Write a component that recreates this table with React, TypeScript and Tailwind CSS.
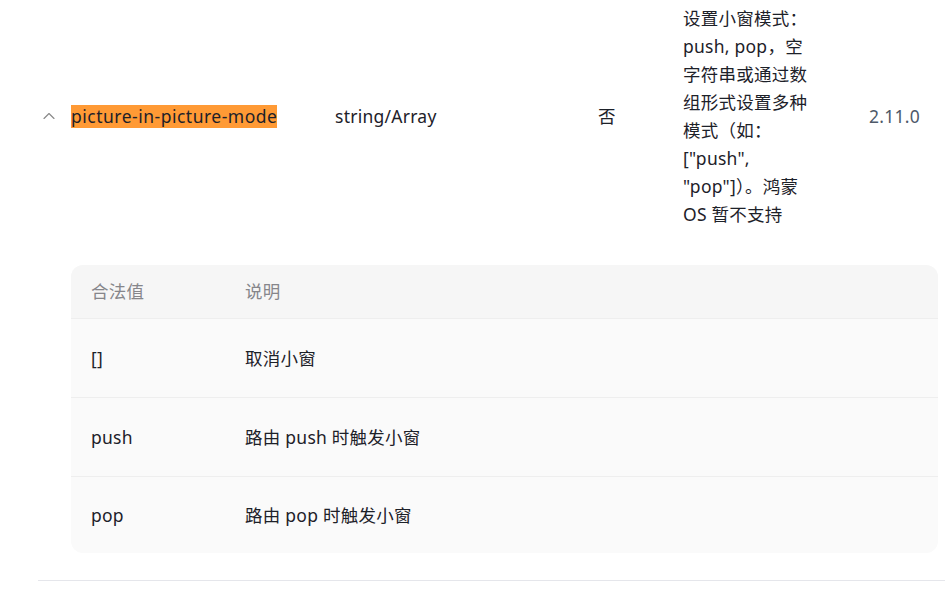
import { ChevronUp } from 'lucide-react'

const font = { fontFamily: '"Noto Sans", "Noto Sans CJK SC", sans-serif' }

// Values table shown when the prop row is expanded
const values = [
  { value: '[]', desc: '取消小窗' },
  { value: 'push', desc: '路由 push 时触发小窗' },
  { value: 'pop', desc: '路由 pop 时触发小窗' },
]

const descLines = [
  '设置小窗模式：',
  'push, pop，空',
  '字符串或通过数',
  '组形式设置多种',
  '模式（如：',
  '["push",',
  '"pop"]）。鸿蒙',
  'OS 暂不支持',
]

export default function App() {
  return (
    <div
      className="w-[945px] h-[590px] bg-white overflow-hidden text-[17.5px] tracking-[0.25px] text-[#1d2129]"
      style={font}
    >
      <div className="ml-[38px] border-b border-[#e5e6eb] pb-[27px]">
        {/* Prop row */}
        <div className="flex items-center pt-[4px] pb-[4px]">
          <div className="w-[33px] pl-[1px] flex items-center text-[#8a8a8a]">
            <ChevronUp size={20} strokeWidth={1.4} />
          </div>
          <div className="w-[264px]">
            <span className="bg-[#ff9a35] leading-[23px] inline-block tracking-[0.5px]">picture-in-picture-mode</span>
          </div>
          <div className="w-[263px]">string/Array</div>
          <div className="w-[85px]">否</div>
          <div className="w-[186px] leading-[28px]">
            {descLines.map((line) => (
              <div key={line} className="whitespace-nowrap">{line}</div>
            ))}
          </div>
          <div className="text-[#4e5969]">2.11.0</div>
        </div>

        {/* Expanded values */}
        <div className="ml-[33px] mr-[7px] mt-[33px] rounded-[12px] bg-[#fafafa] overflow-hidden">
          <div className="flex items-center h-[53px] bg-[#f6f6f6] text-[#86868b]">
            <div className="w-[174px] pl-[20px]">合法值</div>
            <div>说明</div>
          </div>
          {values.map((row, i) => (
            <div
              key={row.value}
              className={`flex items-center border-t border-[#eeeeee] ${i === values.length - 1 ? 'h-[77px]' : 'h-[79px]'}`}
            >
              <div className="w-[174px] pl-[20px]">{row.value}</div>
              <div>{row.desc}</div>
            </div>
          ))}
        </div>
      </div>
    </div>
  )
}
